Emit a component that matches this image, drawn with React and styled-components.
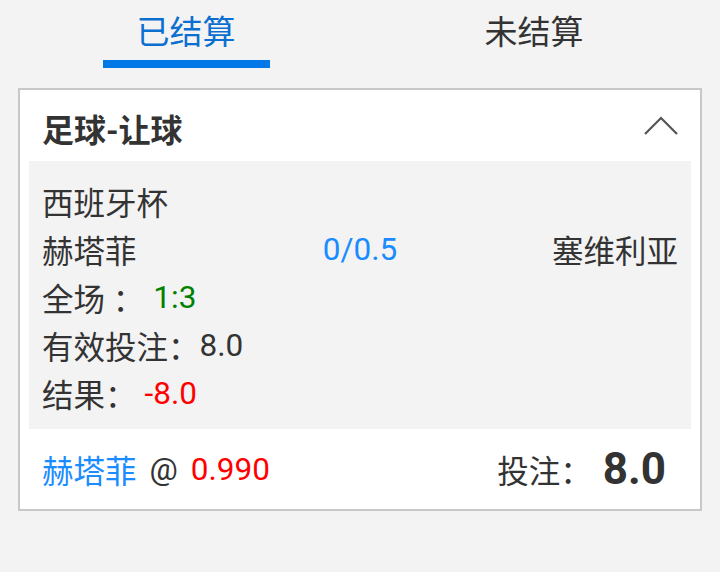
import React, { useState } from 'react'
import styled, { createGlobalStyle } from 'styled-components'

const GlobalStyle = createGlobalStyle`
  html, body {
    margin: 0;
    padding: 0;
    background: #f3f3f3;
    font-family: Roboto, "Noto Sans CJK SC", sans-serif;
    color: #333;
  }
`

const Page = styled.div`
  width: 720px;
  min-height: 572px;
  background: #f3f3f3;
`

const Tabs = styled.div`
  display: flex;
  gap: 12px;
  padding: 13px 18px 0;
`

const Tab = styled.div`
  flex: 1;
  display: flex;
  flex-direction: column;
  align-items: center;
  cursor: pointer;
`

const TabLabel = styled.div`
  font-size: 33px;
  line-height: 40px;
  color: ${props => props.active ? '#0a6fd0' : '#333'};
`

const TabBar = styled.div`
  width: 167px;
  height: 8px;
  margin-top: 7px;
  background: ${props => props.active ? '#0078e6' : 'transparent'};
`

const Card = styled.div`
  margin: 20px 18px 0;
  background: #fff;
  border: 2px solid #c8c8c8;
`

const CardHeader = styled.div`
  height: 71px;
  display: flex;
  align-items: center;
  justify-content: space-between;
  padding: 0 22px 0 22px;
`

const Title = styled.div`
  font-size: 32px;
  font-weight: bold;
  color: #333;
  padding-top: 4px;
`

const Detail = styled.div`
  margin: 0 9px;
  padding: 16px 13px 12px;
  background: #f3f3f3;
`

const Row = styled.div`
  display: flex;
  align-items: center;
  height: 48px;
  font-size: 31.5px;
  color: #333;
`

const MatchRow = styled(Row)`
  display: grid;
  grid-template-columns: 1fr auto 1fr;
`

const Away = styled.span`
  text-align: right;
`

const Value = styled.span`
  color: ${props => props.color || '#333'};
  margin-left: ${props => props.gap || 0}px;
`

const Handicap = styled.span`
  color: #1a8cff;
`

const Footer = styled.div`
  height: 80px;
  display: flex;
  align-items: center;
  justify-content: space-between;
  padding: 0 34px 0 22px;
  font-size: 31.5px;
`

const Pick = styled.div`
  display: flex;
  align-items: center;
`

const Team = styled.span`
  color: #1a8cff;
`

const At = styled.span`
  color: #333;
  margin-left: 13px;
`

const Odds = styled.span`
  color: #ff0000;
  margin-left: 13px;
`

const Stake = styled.div`
  display: flex;
  align-items: center;
  color: #333;
`

const StakeAmount = styled.span`
  font-size: 44px;
  font-weight: bold;
  margin-left: 11px;
  color: #333;
`

const Chevron = () => (
  <svg width="34" height="20" viewBox="0 0 34 20">
    <polyline points="1,18 17,2 33,18" fill="none" stroke="#555" strokeWidth="2.2" />
  </svg>
)

export default function App() {
  const [tab, setTab] = useState(0)
  return (
    <Page>
      <GlobalStyle />
      <Tabs>
        {['已结算', '未结算'].map((t, i) => (
          <Tab key={t} onClick={() => setTab(i)}>
            <TabLabel active={tab === i}>{t}</TabLabel>
            <TabBar active={tab === i} />
          </Tab>
        ))}
      </Tabs>
      <Card>
        <CardHeader>
          <Title>足球-让球</Title>
          <Chevron />
        </CardHeader>
        <Detail>
          <Row>西班牙杯</Row>
          <MatchRow>
            <span>赫塔菲</span>
            <Handicap>0/0.5</Handicap>
            <Away>塞维利亚</Away>
          </MatchRow>
          <Row>全场 ：<Value color="#008000" gap={9}>1:3</Value></Row>
          <Row>有效投注：<Value gap={0}>8.0</Value></Row>
          <Row>结果：<Value color="#ff0000" gap={8}>-8.0</Value></Row>
        </Detail>
        <Footer>
          <Pick>
            <Team>赫塔菲</Team>
            <At>@</At>
            <Odds>0.990</Odds>
          </Pick>
          <Stake>
            投注：
            <StakeAmount>8.0</StakeAmount>
          </Stake>
        </Footer>
      </Card>
    </Page>
  )
}
